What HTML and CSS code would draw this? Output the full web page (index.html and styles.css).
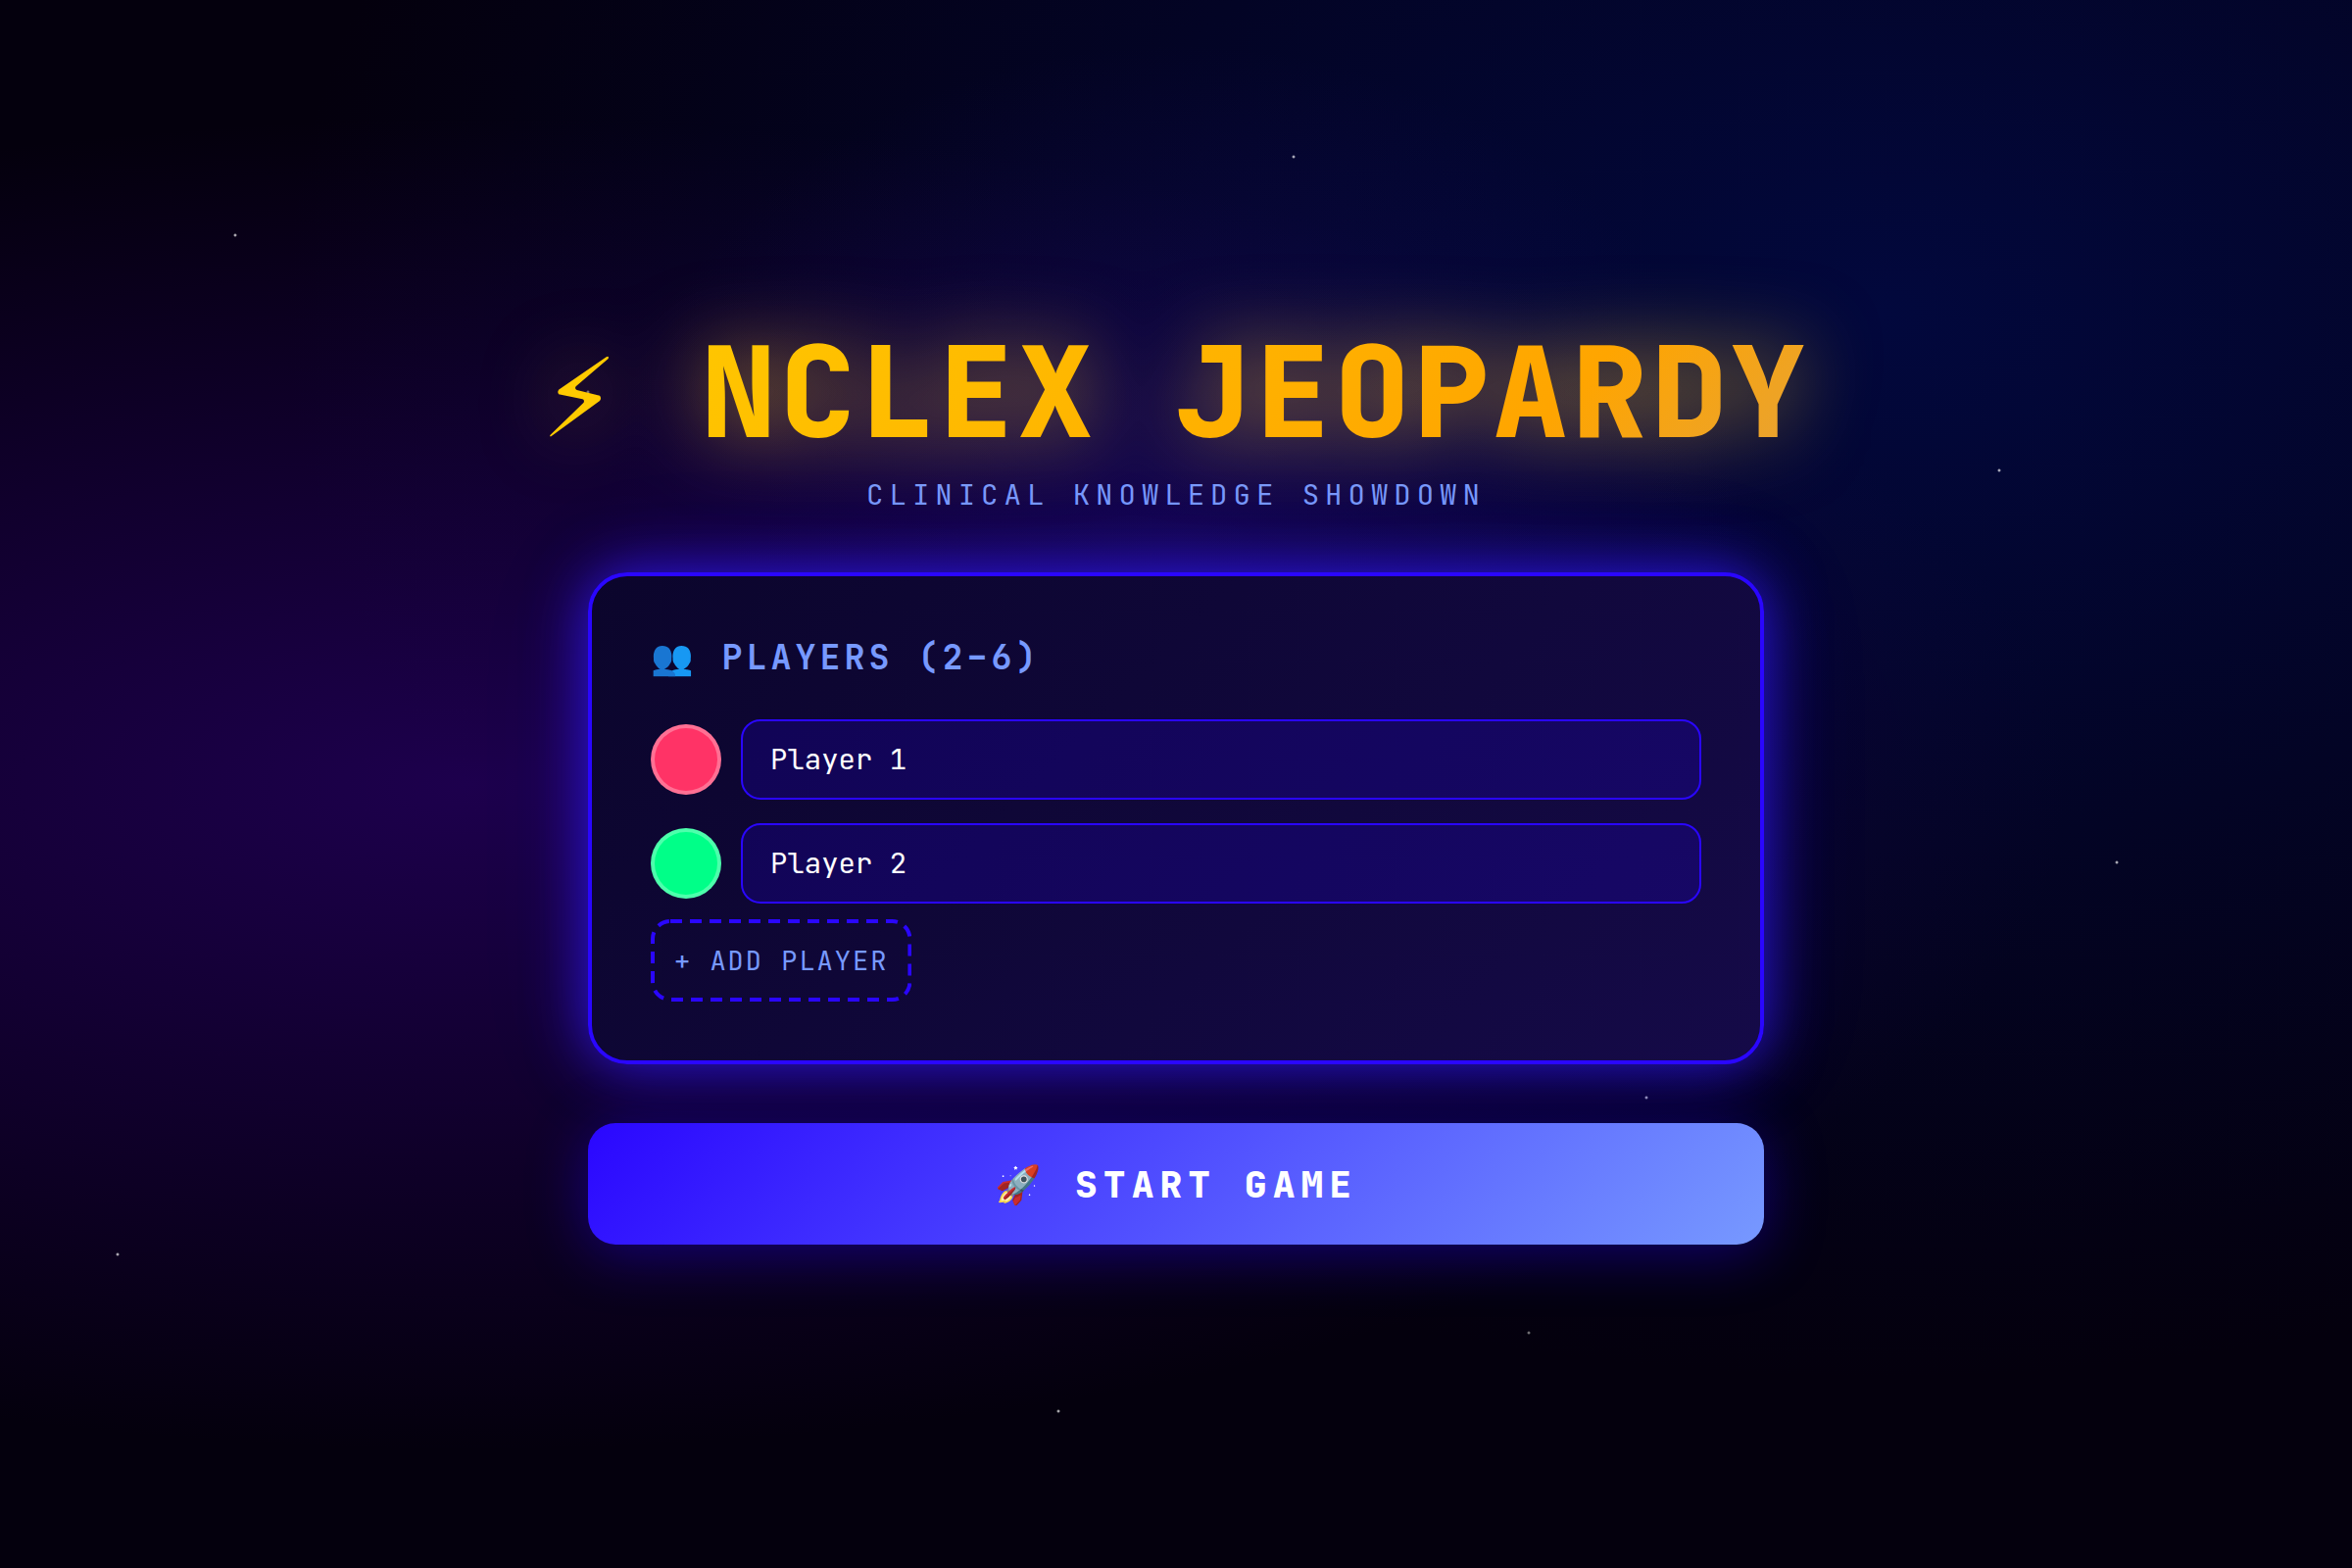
FILE: index.html
```
<!DOCTYPE html>
<html lang="en">

<head>
    <meta charset="UTF-8" />
    <meta name="viewport" content="width=device-width, initial-scale=1.0" />
    <title>NCLEX Jeopardy</title>
    <link rel="stylesheet" href="styles.css">
</head>

<body>
    <main class="setup">
        <h1 class="title"><svg class="bolt" viewBox="42 0 243 390" aria-hidden="true"><path d="M239 73Q245 69 246 74L245 78L146 163Q141 170 149 174L219 191Q225 199 219 207L70 316Q65 317 67 312L170 212Q173 205 166 202L93 187Q88 180 93 173Z" /></svg> NCLEX JEOPARDY</h1>
        <p class="subtitle">CLINICAL KNOWLEDGE SHOWDOWN</p>

        <form class="setup-form">
            <section class="card">
                <h2>👥 PLAYERS (2–6)</h2>

                <div class="players">
                    <div class="player-row">
                        <span class="player-color red"></span>
                        <input type="text" class="player-name" aria-label="Player 1 name" value="Player 1">
                    </div>
                    <div class="player-row">
                        <span class="player-color green"></span>
                        <input type="text" class="player-name" aria-label="Player 2 name" value="Player 2">
                    </div>
                </div>

                <button type="button" class="add-player">
                    <svg class="dashes" aria-hidden="true"><rect x="2" y="2" rx="18" /></svg>
                    + ADD PLAYER
                </button>
            </section>

            <button type="button" class="start-game">🚀 START GAME</button>
        </form>
    </main>
</body>

</html>
```
FILE: styles.css
```
* {
    box-sizing: border-box;
    margin: 0;
    padding: 0;
}

body {
    min-height: 100vh;
    display: flex;
    align-items: center;
    justify-content: center;
    font-family: "JetBrains Mono", "Noto Color Emoji", monospace;
    color: #fff;
    /* stars first, then the nebula glows */
    background:
        radial-gradient(2px 2px at 10% 15%, #fff, transparent),
        radial-gradient(2px 2px at 25% 25%, #aaa, transparent),
        radial-gradient(2px 2px at 55% 10%, #fff, transparent),
        radial-gradient(2px 2px at 85% 30%, #fff, transparent),
        radial-gradient(2px 2px at 90% 55%, #fff, transparent),
        radial-gradient(2px 2px at 70% 70%, #fff, transparent),
        radial-gradient(2px 2px at 5% 80%, #fff, transparent),
        radial-gradient(2px 2px at 65% 85%, #aaa, transparent),
        radial-gradient(2px 2px at 45% 90%, #fff, transparent),
        radial-gradient(ellipse at 50% 35%, rgba(34, 14, 130, 0.35) 0%, transparent 35%),
        radial-gradient(ellipse at 20% 50%, #1d004d 0%, transparent 60%),
        radial-gradient(ellipse at 80% 20%, #02083d 0%, transparent 60%),
        #04000d;
}

.setup {
    display: flex;
    flex-direction: column;
    align-items: center;
    width: 100%;
    padding: 40px;
}

.title {
    font-size: 128px;
    font-weight: 800;
    line-height: 140px;
    letter-spacing: 4px;
    white-space: nowrap;
    background: linear-gradient(135deg, #ffcc00 0%, #ffa500 78%, #e6a236 100%);
    -webkit-background-clip: text;
    background-clip: text;
    -webkit-text-fill-color: transparent;
    filter: drop-shadow(0 0 40px rgba(255, 200, 40, 0.6));
}

.bolt {
    width: 81px;
    height: 130px;
    vertical-align: -24px;
    fill: #ffca00;
}

.subtitle {
    margin: 16px 0 60px;
    font-size: 29px;
    line-height: 38px;
    letter-spacing: 6px;
    color: #7799ff;
}

.setup-form {
    display: flex;
    flex-direction: column;
    gap: 60px;
    width: 100%;
    max-width: 1200px;
}

.card {
    padding: 60px;
    border: 4px solid #2a06ff;
    border-radius: 40px;
    background: linear-gradient(135deg, #0b052c, #150a48);
    box-shadow: 0 0 60px rgba(50, 26, 255, 0.85), 0 0 120px rgba(38, 0, 255, 0.1);
}

.card h2 {
    margin-bottom: 40px;
    font-size: 35px;
    font-weight: 700;
    line-height: 46px;
    letter-spacing: 4px;
    color: #7799ff;
}

.players {
    display: flex;
    flex-direction: column;
    gap: 24px;
    margin-bottom: 16px;
}

.player-row {
    display: flex;
    align-items: center;
    gap: 20px;
}

.player-color {
    width: 72px;
    height: 72px;
    flex-shrink: 0;
    border: 4px solid rgba(255, 255, 255, 0.3);
    border-radius: 50%;
}

.red {
    background-color: #ff3366;
}

.green {
    background-color: #00ff88;
}

.player-name {
    flex: 1;
    min-width: 0;
    padding: 20px 28px;
    border: 2px solid #2a06ff;
    border-radius: 20px;
    background: rgba(38, 0, 255, 0.18);
    font-family: inherit;
    font-size: 29px;
    line-height: 38px;
    color: #fff;
}

.add-player {
    position: relative;
    padding: 24px;
    border: none;
    border-radius: 20px;
    background: transparent;
    font-family: inherit;
    font-size: 27px;
    line-height: 36px;
    letter-spacing: 2px;
    color: #7799ff;
    cursor: pointer;
}

.dashes {
    position: absolute;
    top: 0;
    left: 0;
    width: 100%;
    height: 100%;
}

.dashes rect {
    width: calc(100% - 4px);
    height: calc(100% - 4px);
    fill: none;
    stroke: #2a06ff;
    stroke-width: 4px;
    stroke-dasharray: 12 8;
}

.start-game {
    padding: 36px;
    border: none;
    border-radius: 28px;
    background: linear-gradient(135deg, #2a06ff, #7799ff);
    box-shadow: 0 8px 60px rgba(38, 0, 255, 0.4);
    font-family: inherit;
    font-size: 38px;
    font-weight: 800;
    line-height: 52px;
    letter-spacing: 6px;
    color: #fff;
    cursor: pointer;
}
```
